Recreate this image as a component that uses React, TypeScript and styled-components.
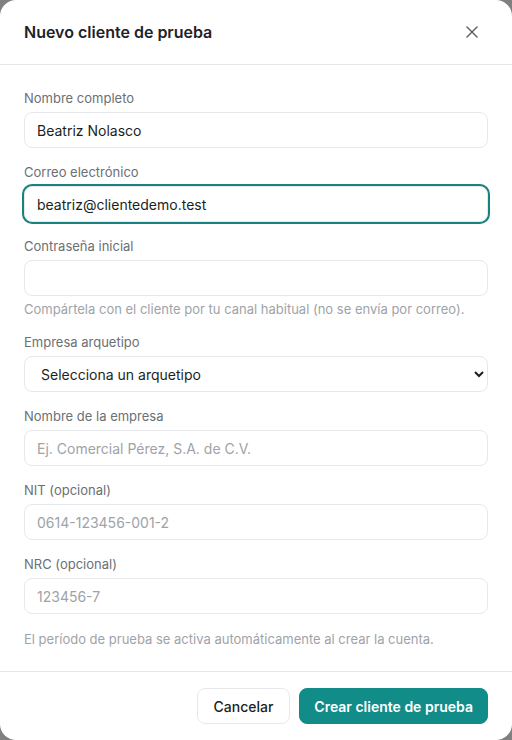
import React from "react";
import styled, { createGlobalStyle } from "styled-components";

const Global = createGlobalStyle`
  html, body { margin: 0; padding: 0; background: #808080; }
  body { font-family: Inter, "Noto Sans", "Liberation Sans", sans-serif; -webkit-font-smoothing: antialiased; }
  * { box-sizing: border-box; }
`;

const Dialog = styled.div`
  width: 512px;
  height: 740px;
  background: #ffffff;
  border-radius: 16px;
  display: flex;
  flex-direction: column;
  overflow: hidden;
`;

const Header = styled.div`
  height: 65px;
  padding: 0 24px;
  display: flex;
  align-items: center;
  justify-content: space-between;
  border-bottom: 1px solid #e5e7eb;
`;

const Title = styled.h2`
  margin: 0;
  font-size: 16px;
  line-height: 24px;
  font-weight: 600;
  color: #1f2328;
  padding-bottom: 1px;
`;

const CloseButton = styled.button`
  width: 24px;
  height: 24px;
  border: none;
  background: transparent;
  padding: 0;
  display: flex;
  align-items: center;
  justify-content: center;
  color: #555b61;
  margin-right: 4px;
  cursor: pointer;
`;

const Body = styled.div`
  flex: 1;
  padding: 23px 24px 0;
  display: flex;
  flex-direction: column;
  gap: 14px;
`;

const Field = styled.div`
  display: flex;
  flex-direction: column;
`;

const Label = styled.label`
  font-size: 13px;
  line-height: 20px;
  color: #6b7075;
  margin-bottom: 4px;
`;

const Input = styled.input<{ $focused?: boolean }>`
  height: 36px;
  width: 100%;
  border: 1px solid #e6e8eb;
  border-radius: 8px;
  padding: 0 12px;
  font-family: inherit;
  font-size: 14px;
  color: #1b1f23;
  background: #fff;
  outline: none;
  box-shadow: ${(p) => (p.$focused ? "0 0 0 2px #17827f" : "none")};
  &::placeholder { color: #9ea3a8; }
`;

const Select = styled.select`
  height: 36px;
  width: 100%;
  border: 1px solid #e6e8eb;
  border-radius: 8px;
  padding: 0 6px 0 12px;
  font-family: inherit;
  font-size: 14px;
  color: #1b1f23;
  background: #fff;
  outline: none;
`;

const Hint = styled.p`
  margin: 4px 0 0;
  font-size: 13px;
  line-height: 18px;
  color: #9ea3a8;
`;

const Note = styled.p`
  margin: 2px 0 0;
  font-size: 13px;
  line-height: 18px;
  color: #9ea3a8;
`;

const Footer = styled.div`
  border-top: 1px solid #e5e7eb;
  padding: 16px 24px;
  display: flex;
  justify-content: flex-end;
  gap: 9px;
`;

const Button = styled.button<{ $primary?: boolean }>`
  height: 36px;
  padding: 0 ${(p) => (p.$primary ? 14 : 16)}px;
  border-radius: 8px;
  font-family: inherit;
  font-size: 14px;
  font-weight: ${(p) => (p.$primary ? 600 : 500)};
  border: 1px solid ${(p) => (p.$primary ? "#128c89" : "#e6e8eb")};
  background: ${(p) => (p.$primary ? "#128c89" : "#ffffff")};
  color: ${(p) => (p.$primary ? "#ffffff" : "#1b1f23")};
  cursor: pointer;
`;

export default function App() {
  return (
    <>
      <Global />
      <Dialog>
        <Header>
          <Title>Nuevo cliente de prueba</Title>
          <CloseButton aria-label="Cerrar">
            <svg width="12" height="12" viewBox="0 0 12 12" fill="none">
              <path d="M1 1L11 11M11 1L1 11" stroke="currentColor" strokeWidth="1.4" strokeLinecap="round" />
            </svg>
          </CloseButton>
        </Header>
        <Body>
          <Field>
            <Label>Nombre completo</Label>
            <Input defaultValue="Beatriz Nolasco" />
          </Field>
          <Field>
            <Label>Correo electrónico</Label>
            <Input $focused defaultValue="beatriz@clientedemo.test" />
          </Field>
          <Field>
            <Label>Contraseña inicial</Label>
            <Input type="password" />
            <Hint>Compártela con el cliente por tu canal habitual (no se envía por correo).</Hint>
          </Field>
          <Field>
            <Label>Empresa arquetipo</Label>
            <Select defaultValue="">
              <option value="">Selecciona un arquetipo</option>
            </Select>
          </Field>
          <Field>
            <Label>Nombre de la empresa</Label>
            <Input placeholder="Ej. Comercial Pérez, S.A. de C.V." />
          </Field>
          <Field>
            <Label>NIT (opcional)</Label>
            <Input placeholder="0614-123456-001-2" />
          </Field>
          <Field>
            <Label>NRC (opcional)</Label>
            <Input placeholder="123456-7" />
          </Field>
          <Note>El período de prueba se activa automáticamente al crear la cuenta.</Note>
        </Body>
        <Footer>
          <Button>Cancelar</Button>
          <Button $primary>Crear cliente de prueba</Button>
        </Footer>
      </Dialog>
    </>
  );
}
